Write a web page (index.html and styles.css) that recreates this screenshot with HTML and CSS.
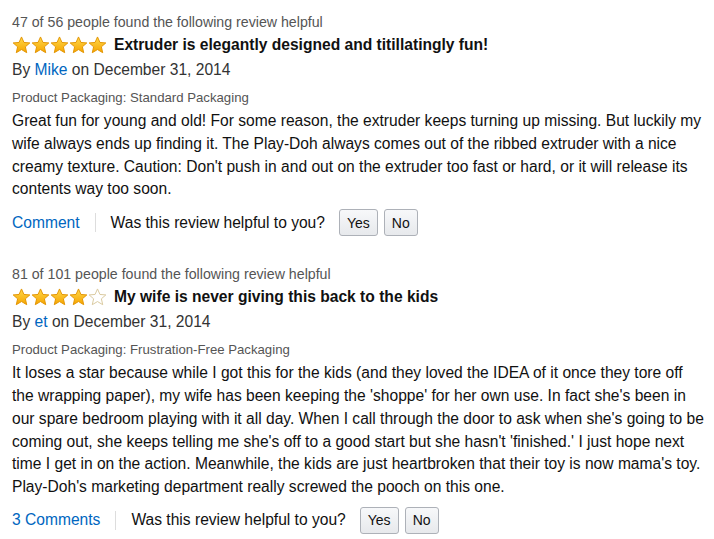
FILE: index.html
```html
<!DOCTYPE html>
<html>
<head>
<meta charset="utf-8">
<link rel="stylesheet" href="styles.css">
</head>
<body>
<svg width="0" height="0" class="defs">
  <defs>
    <linearGradient id="gold" x1="0" y1="0" x2="0" y2="1">
      <stop offset="0" stop-color="#ffd84a"/>
      <stop offset="1" stop-color="#f6a500"/>
    </linearGradient>
    <symbol id="star" viewBox="0 0 20 19">
      <path d="M10 1 L12.6 6.8 L18.8 7.3 L14.1 11.4 L15.5 17.6 L10 14.3 L4.5 17.6 L5.9 11.4 L1.2 7.3 L7.4 6.8 Z" fill="url(#gold)" stroke="#e19300" stroke-width="1" stroke-linejoin="round"/>
    </symbol>
    <symbol id="star-empty" viewBox="0 0 20 19">
      <path d="M10 1 L12.6 6.8 L18.8 7.3 L14.1 11.4 L15.5 17.6 L10 14.3 L4.5 17.6 L5.9 11.4 L1.2 7.3 L7.4 6.8 Z" fill="#fff" stroke="#d8c79a" stroke-width="1" stroke-linejoin="round"/>
    </symbol>
  </defs>
</svg>

<div class="review">
  <div class="helpful-count">47 of 56 people found the following review helpful</div>
  <div class="title-row">
    <span class="stars">
      <svg class="star"><use href="#star"/></svg><svg class="star"><use href="#star"/></svg><svg class="star"><use href="#star"/></svg><svg class="star"><use href="#star"/></svg><svg class="star"><use href="#star"/></svg>
    </span>
    <span class="title">Extruder is elegantly designed and titillatingly fun!</span>
  </div>
  <div class="byline">By <a class="link">Mike</a> on December 31, 2014</div>
  <div class="packaging">Product Packaging: Standard Packaging</div>
  <div class="body">Great fun for young and old! For some reason, the extruder keeps turning up missing. But luckily my wife always ends up finding it. The Play-Doh always comes out of the ribbed extruder with a nice creamy texture. Caution: Don't push in and out on the extruder too fast or hard, or it will release its contents way too soon.</div>
  <div class="actions">
    <a class="link comment">Comment</a>
    <span class="sep"></span>
    <span class="question">Was this review helpful to you?</span>
    <span class="btn">Yes</span>
    <span class="btn">No</span>
  </div>
</div>

<div class="review">
  <div class="helpful-count">81 of 101 people found the following review helpful</div>
  <div class="title-row">
    <span class="stars">
      <svg class="star"><use href="#star"/></svg><svg class="star"><use href="#star"/></svg><svg class="star"><use href="#star"/></svg><svg class="star"><use href="#star"/></svg><svg class="star"><use href="#star-empty"/></svg>
    </span>
    <span class="title">My wife is never giving this back to the kids</span>
  </div>
  <div class="byline">By <a class="link">et</a> on December 31, 2014</div>
  <div class="packaging">Product Packaging: Frustration-Free Packaging</div>
  <div class="body">It loses a star because while I got this for the kids (and they loved the IDEA of it once they tore off the wrapping paper), my wife has been keeping the 'shoppe' for her own use. In fact she's been in our spare bedroom playing with it all day. When I call through the door to ask when she's going to be coming out, she keeps telling me she's off to a good start but she hasn't 'finished.' I just hope next time I get in on the action. Meanwhile, the kids are just heartbroken that their toy is now mama's toy. Play-Doh's marketing department really screwed the pooch on this one.</div>
  <div class="actions">
    <a class="link comment">3 Comments</a>
    <span class="sep"></span>
    <span class="question">Was this review helpful to you?</span>
    <span class="btn">Yes</span>
    <span class="btn">No</span>
  </div>
</div>
</body>
</html>
```
FILE: styles.css
```css
html, body {
  margin: 0;
  padding: 0;
  background: #fff;
}
body {
  font-family: "Liberation Sans", Arial, sans-serif;
  color: #111;
  padding: 11px 12px 0 12px;
  width: 693px;
}
.defs {
  position: absolute;
  width: 0;
  height: 0;
}
.review {
  margin-bottom: 27px;
}
.helpful-count {
  font-size: 14.2px;
  line-height: 22px;
  color: #555;
}
.title-row {
  display: flex;
  align-items: center;
  height: 26px;
  margin-top: -1px;
}
.stars {
  display: flex;
  margin-right: 7px;
}
.star {
  width: 19px;
  height: 18px;
}
.title {
  font-weight: bold;
  font-size: 15.6px;
}
.byline {
  font-size: 15.6px;
  line-height: 24px;
  color: #333;
}
.link {
  color: #0066c0;
  text-decoration: none;
}
.packaging {
  font-size: 13.2px;
  line-height: 20px;
  color: #555;
  margin-top: 6px;
}
.body {
  font-size: 15.6px;
  line-height: 22.8px;
  color: #111;
  margin-top: 2px;
}
.actions {
  display: flex;
  align-items: center;
  margin-top: 8px;
  font-size: 15.6px;
}
.sep {
  width: 1px;
  height: 19px;
  background: #ddd;
  margin: 0 15px 0 15px;
}
.question {
  margin-right: 14px;
}
.btn {
  display: inline-flex;
  align-items: center;
  justify-content: center;
  height: 25px;
  padding: 0 7px;
  min-width: 18px;
  border: 1px solid #adb1b8;
  border-radius: 3px;
  background: linear-gradient(#f7f8fa, #e7e9ec);
  font-size: 14px;
  color: #111;
  margin-right: 6px;
}
```
